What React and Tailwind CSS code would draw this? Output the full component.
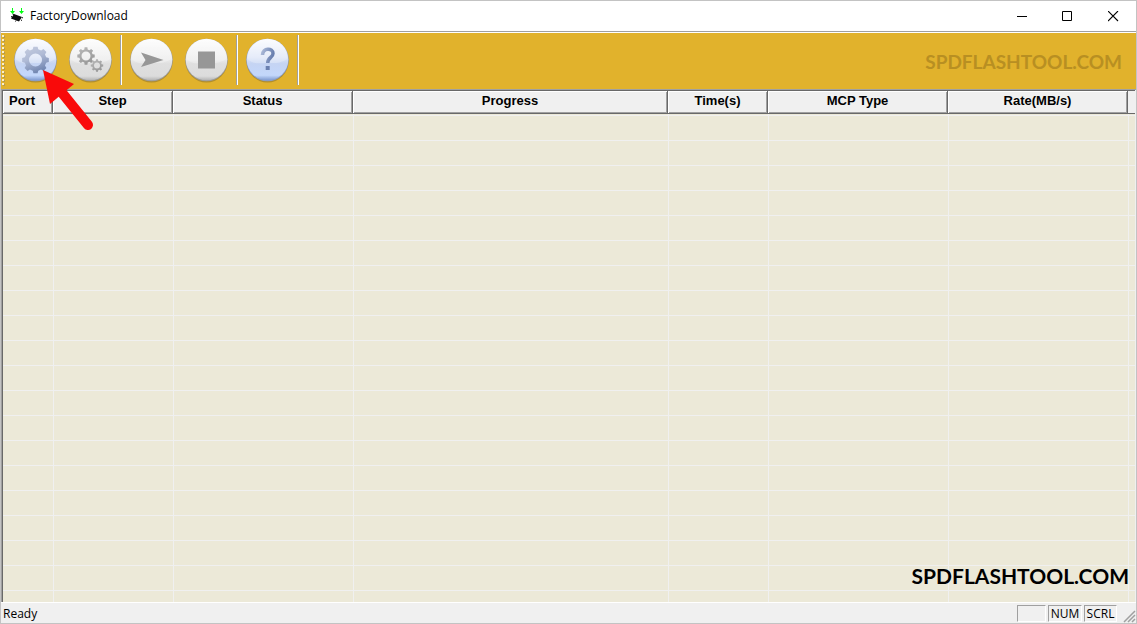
import React from 'react';

const COLUMNS = [
    { label: 'Port', width: 'w-[50px]', align: 'text-left pl-1.5' },
    { label: 'Step', width: 'w-[120px]', align: 'text-center' },
    { label: 'Status', width: 'w-[180px]', align: 'text-center' },
    { label: 'Progress', width: '', align: 'text-center' },
    { label: 'Time(s)', width: 'w-[100px]', align: 'text-center' },
    { label: 'MCP Type', width: 'w-[180px]', align: 'text-center' },
    { label: 'Rate(MB/s)', width: 'w-[180px]', align: 'text-center' },
    { label: '', width: 'w-[7px]', align: 'text-center' },
];

const ROWS = Array.from({ length: 19 }, (_, i) => i);

// Builds a gear outline as a closed path around (cx, cy)
const gearPath = (cx, cy, outer, inner, teeth) => {
    const points = [];
    const step = (Math.PI * 2) / teeth;
    for (let i = 0; i < teeth; i++) {
        const a = i * step - Math.PI / 2;
        [[-0.32, inner], [-0.2, outer], [0.2, outer], [0.32, inner]].forEach(([f, r]) => {
            points.push(`${(cx + r * Math.cos(a + f * step)).toFixed(2)} ${(cy + r * Math.sin(a + f * step)).toFixed(2)}`);
        });
    }
    return `M${points.join('L')}Z`;
};

const Gear = ({ cx, cy, outer, inner, hole, teeth, fill }) => (
    <path
        d={`${gearPath(cx, cy, outer, inner, teeth)}M${cx - hole} ${cy}a${hole} ${hole} 0 1 0 ${hole * 2} 0a${hole} ${hole} 0 1 0 ${-hole * 2} 0Z`}
        fill={fill}
        fillRule="evenodd"
    />
);

const Defs = () => (
    <svg width="0" height="0" className="absolute" aria-hidden="true">
        <defs>
            <linearGradient id="grayBall" x1="0" y1="0" x2="0" y2="1">
                <stop offset="0" stopColor="#fdfdfd" />
                <stop offset="0.5" stopColor="#ebebeb" />
                <stop offset="0.6" stopColor="#dfdfdf" />
                <stop offset="0.9" stopColor="#dcdcdc" />
                <stop offset="1" stopColor="#b4b4b4" />
            </linearGradient>
            <linearGradient id="blueBall" x1="0" y1="0" x2="0" y2="1">
                <stop offset="0" stopColor="#fbfcff" />
                <stop offset="0.45" stopColor="#dde5f7" />
                <stop offset="0.6" stopColor="#c5d4f3" />
                <stop offset="0.88" stopColor="#c3d7fb" />
                <stop offset="1" stopColor="#7f9ad0" />
            </linearGradient>
            <linearGradient id="blueGlyph" x1="0" y1="0" x2="0.4" y2="1">
                <stop offset="0" stopColor="#c6cddf" />
                <stop offset="0.5" stopColor="#b0bbd6" />
                <stop offset="1" stopColor="#7589b3" />
            </linearGradient>
            <linearGradient id="helpGlyph" x1="0" y1="0" x2="1" y2="0.4">
                <stop offset="0" stopColor="#a9b7d6" />
                <stop offset="1" stopColor="#6a80b0" />
            </linearGradient>
            <linearGradient id="grayGlyph" x1="0" y1="0" x2="0.6" y2="1">
                <stop offset="0" stopColor="#bcbcbc" />
                <stop offset="1" stopColor="#979797" />
            </linearGradient>
        </defs>
    </svg>
);

const ToolButton = ({ label, blue, children }) => (
    <button type="button" aria-label={label} className="h-12 w-12 shrink-0">
        <svg viewBox="0 0 48 48" className="h-12 w-12">
            <circle cx="24.5" cy="25.5" r="21" fill="#6b5a2c" opacity="0.4" />
            <circle cx="24.5" cy="24" r="21.3" fill={blue ? '#8a9dc4' : '#9c9c9c'} />
            <circle cx="24.5" cy="23.5" r="20.8" fill={blue ? 'url(#blueBall)' : 'url(#grayBall)'} />
            <path d="M4.500 23a20 20 0 0 1 40 0c-9 5-12 4-20 4s-13 2-20-4Z" fill="#fff" opacity="0.25" />
            {children}
        </svg>
    </button>
);

const Separator = () => (
    <div className="mr-[5px] ml-1.5 h-[50px] w-0.5 shrink-0 border-r border-l border-r-white border-l-[#a0a0a0]" />
);

const TitleBar = () => (
    <header className="flex h-[30px] items-center justify-between bg-white">
        <div className="flex items-center gap-[5px] pl-2">
            <svg viewBox="0 0 16 16" className="h-4 w-4" aria-hidden="true">
                <path d="M5 6l8 3-3 4.500-8-3Z" fill="#0c0c0c" />
                <path d="M5 6.500l-1.500-.5M3.500 9L2 8.500M7 12.500l-.5 1M12 12l1 .5M13 9.500l1 .5" stroke="#0c0c0c" />
                <path d="M3.500 0v5M12.500 0v5" stroke="#00ff10" />
                <path d="M1 3h5L3.500 6ZM10 3h5l-2.500 3Z" fill="#00ff10" />
            </svg>
            <h1 className="text-xs">FactoryDownload</h1>
        </div>
        <div className="flex">
            <button type="button" aria-label="Minimize" className="flex h-[30px] w-[45px] items-center justify-center">
                <svg viewBox="0 0 11 11" className="h-[11px] w-[11px]"><path d="M0 5.500h10" stroke="#000" /></svg>
            </button>
            <button type="button" aria-label="Maximize" className="flex h-[30px] w-[45px] items-center justify-center">
                <svg viewBox="0 0 11 11" className="h-[11px] w-[11px]"><path d="M.5.5h9v9h-9Z" fill="none" stroke="#000" /></svg>
            </button>
            <button type="button" aria-label="Close" className="flex h-[30px] w-[46px] items-center justify-center">
                <svg viewBox="0 0 11 11" className="h-[11px] w-[11px]"><path d="M0 0l10 10M10 0L0 10" stroke="#000" strokeWidth="1.1" /></svg>
            </button>
        </div>
    </header>
);

const Toolbar = () => (
    <div className="relative flex h-[57px] items-center border-t border-t-white bg-[#e1b22c] pr-3.5">
        <svg viewBox="0 0 4 54" className="h-[54px] w-1" aria-hidden="true">
            {ROWS.slice(0, 13).map((i) => (
                <g key={i}>
                    <path d={`M2 ${i * 4 + 2}h2v2h-2z`} fill="#b59a50" />
                    <path d={`M1 ${i * 4 + 1}h2v2h-2z`} fill="#fbf0cc" />
                </g>
            ))}
        </svg>
        <div className="flex items-center pb-0.5 pl-1.5">
            <div className="flex items-center gap-[7px]">
                <ToolButton label="Settings" blue>
                    <Gear cx={24.5} cy={24} outer={13.5} inner={11} hole={6.5} teeth={8} fill="url(#blueGlyph)" />
                </ToolButton>
                <ToolButton label="Advanced settings">
                    <Gear cx={20} cy={20} outer={8.8} inner={6.8} hole={4.5} teeth={8} fill="url(#grayGlyph)" />
                    <Gear cx={31} cy={29.5} outer={6.3} inner={4.8} hole={3} teeth={8} fill="url(#grayGlyph)" />
                </ToolButton>
            </div>
            <Separator />
            <div className="flex items-center gap-[7px]">
                <ToolButton label="Start">
                    <path d="M14 16.500l22.500 7.500L14 31l4.500-7Z" fill="#979797" />
                </ToolButton>
                <ToolButton label="Stop">
                    <path d="M16 15.500h17v17h-17z" fill="#979797" />
                </ToolButton>
            </div>
            <Separator />
            <ToolButton label="Help" blue>
                <path d="M19.500 19c0-7.500 10.500-7.500 10.500-1.500 0 4-5.300 4-5.300 9.500" fill="none" stroke="url(#helpGlyph)" strokeWidth="3.500" />
                <path d="M22.700 30h4v4h-4z" fill="#6a80b0" />
            </ToolButton>
            <Separator />
        </div>
        <span className="ml-auto pt-0.5 font-[Lato,sans-serif] text-[19px] font-bold text-[#b88f22]">SPDFLASHTOOL.COM</span>

        {/* Pointer over the first button */}
        <svg viewBox="0 0 54 62" className="pointer-events-none absolute top-9 left-10 z-10 h-[62px] w-[54px]" aria-hidden="true">
            <path d="M18 20L47 56" stroke="#f90a0a" strokeWidth="10" strokeLinecap="round" />
            <path d="M2 1L33 15L9 35Z" fill="#f90a0a" />
        </svg>
    </div>
);

const PortTable = () => (
    <main className="relative flex-1 border-t border-l border-[#a0a0a0] pr-px">
        <div className="h-full border-t border-l border-[#696969] bg-[#ece9d8]">
            <table className="w-full table-fixed border-separate border-spacing-0">
                <thead>
                    <tr>
                        {COLUMNS.map((col, i) => (
                            <th
                                key={col.label || 'end'}
                                scope="col"
                                className={`${col.width} ${col.align} h-[23px] border-b border-[#696969] bg-[#f0f0f0] p-0 pb-0.5 font-['Liberation_Sans',Arial,sans-serif] text-[13px] leading-5 font-bold ${i < 7 ? 'border-r shadow-[inset_1px_1px_#ffffff,inset_-1px_-1px_#a0a0a0]' : ''}`}
                            >
                                {col.label}
                            </th>
                        ))}
                    </tr>
                </thead>
                <tbody>
                    <tr>
                        {COLUMNS.map((col) => (
                            <td key={col.label || 'end'} className="h-0.5 border-b border-l border-[#f0f0f0] p-0 first:border-l-0" />
                        ))}
                    </tr>
                    {ROWS.map((row) => (
                        <tr key={row}>
                            {COLUMNS.map((col) => (
                                <td key={col.label || 'end'} className="h-[25px] border-b border-l border-[#f0f0f0] p-0 first:border-l-0" />
                            ))}
                        </tr>
                    ))}
                    <tr>
                        {COLUMNS.map((col) => (
                            <td key={col.label || 'end'} className="h-[11px] border-l border-[#f0f0f0] p-0 first:border-l-0" />
                        ))}
                    </tr>
                </tbody>
            </table>
        </div>
        <span className="absolute right-[7px] bottom-[11px] font-[Lato,sans-serif] text-[21px] font-bold">SPDFLASHTOOL.COM</span>
    </main>
);

const StatusBar = () => (
    <footer className="flex h-[21px] border-t border-white bg-[#f0f0f0] text-xs">
        <span className="flex-1 pl-0.5 leading-[22px]">Ready</span>
        <div className="flex gap-0.5 pt-0.5 pb-px leading-4">
            <span className="w-[29px] border border-[#a0a0a0] border-r-white border-b-white" />
            <span className="w-[34px] border border-[#a0a0a0] border-r-white border-b-white text-center">NUM</span>
            <span className="w-[33px] border border-[#a0a0a0] border-r-white border-b-white text-center">SCRL</span>
        </div>
        <svg viewBox="0 0 19 20" className="h-5 w-[19px]" aria-hidden="true">
            <path d="M7 19L18 8M11 19L18 12M15 19L18 16" stroke="#a0a0a0" strokeWidth="1.5" />
        </svg>
    </footer>
);

export default function App() {
    return (
        <div className="flex min-h-screen flex-col border border-[#c3c3c3] bg-[#f0f0f0] font-['Open_Sans','Noto_Sans',sans-serif] text-black">
            <Defs />
            <TitleBar />
            <div className="h-px bg-[#a0a0a0]" />
            <Toolbar />
            <PortTable />
            <StatusBar />
        </div>
    );
}
